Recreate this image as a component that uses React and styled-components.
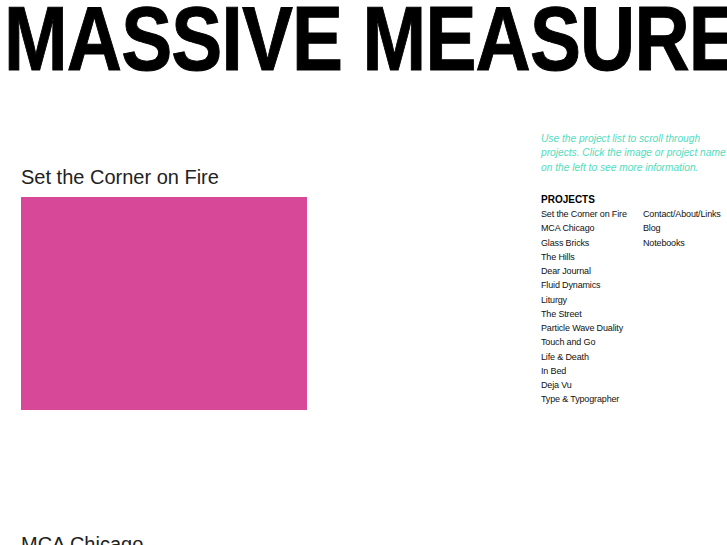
import styled, { createGlobalStyle } from 'styled-components';

const projects = [
  'Set the Corner on Fire',
  'MCA Chicago',
  'Glass Bricks',
  'The Hills',
  'Dear Journal',
  'Fluid Dynamics',
  'Liturgy',
  'The Street',
  'Particle Wave Duality',
  'Touch and Go',
  'Life & Death',
  'In Bed',
  'Deja Vu',
  'Type & Typographer',
];

const links = ['Contact/About/Links', 'Blog', 'Notebooks'];

const GlobalStyle = createGlobalStyle`
  html, body {
    margin: 0;
    padding: 0;
    background: #fff;
    overflow: hidden;
  }
  body {
    font-family: "Liberation Sans", Arial, sans-serif;
  }
`;

const App = () => {
  return (
    <>
      <GlobalStyle />
      <Page>
        <Masthead>
          <MastheadText>MASSIVE MEASURE</MastheadText>
        </Masthead>
        <Body>
          <Projects>
            {projects.slice(0, 2).map((name) => (
              <Project key={name}>
                <ProjectTitle>{name}</ProjectTitle>
                <ProjectImage />
              </Project>
            ))}
          </Projects>
          <Sidebar>
            <Hint>
              Use the project list to scroll through projects. Click the image or project name on
              the left to see more information.
            </Hint>
            <Lists>
              <List>
                <ListHead>PROJECTS</ListHead>
                {projects.map((name) => (
                  <Item key={name}>{name}</Item>
                ))}
              </List>
              <List $offset>
                {links.map((name) => (
                  <Item key={name}>{name}</Item>
                ))}
              </List>
            </Lists>
          </Sidebar>
        </Body>
      </Page>
    </>
  );
};

const Page = styled.div`
  width: 727px;
  height: 545px;
  overflow: hidden;
`;

const Masthead = styled.h1`
  margin: -7px 0 0 4px;
  height: 91px;
  font-family: "Liberation Sans", Arial, sans-serif;
  font-weight: 700;
  font-size: 91px;
  line-height: 91px;
  color: #000;
  white-space: nowrap;
`;

/* the original face is a condensed grotesque; squeeze the bold sans to its width */
const MastheadText = styled.span`
  display: inline-block;
  transform: scaleX(0.84);
  transform-origin: 0 50%;
  letter-spacing: -1px;
  -webkit-text-stroke: 1px #000;
`;

const Body = styled.div`
  display: flex;
  padding-top: 48px;
`;

const Projects = styled.div`
  flex: none;
  width: 520px;
  padding: 34px 0 0 21px;
`;

const Project = styled.div`
  margin-bottom: 123px;
`;

const ProjectTitle = styled.h2`
  margin: 0 0 8px;
  font-size: 20px;
  font-weight: 400;
  line-height: 23px;
  color: #222;
`;

const ProjectImage = styled.div`
  width: 286px;
  height: 213px;
  background: #d74898;
`;

const Sidebar = styled.div`
  flex: none;
  width: 190px;
`;

const Hint = styled.p`
  margin: 0 0 18px;
  font-size: 10.2px;
  font-style: italic;
  line-height: 14.3px;
  color: #52dcbc;
`;

const Lists = styled.div`
  display: flex;
`;

const List = styled.div`
  flex: none;
  width: 102px;
  padding-top: ${(p) => (p.$offset ? '14.25px' : '0')};
`;

const ListHead = styled.div`
  font-size: 10px;
  font-weight: 700;
  line-height: 14.25px;
  color: #000;
`;

const Item = styled.div`
  font-size: 9px;
  letter-spacing: -0.15px;
  line-height: 14.25px;
  color: #111;
  white-space: nowrap;
`;

export default App;
